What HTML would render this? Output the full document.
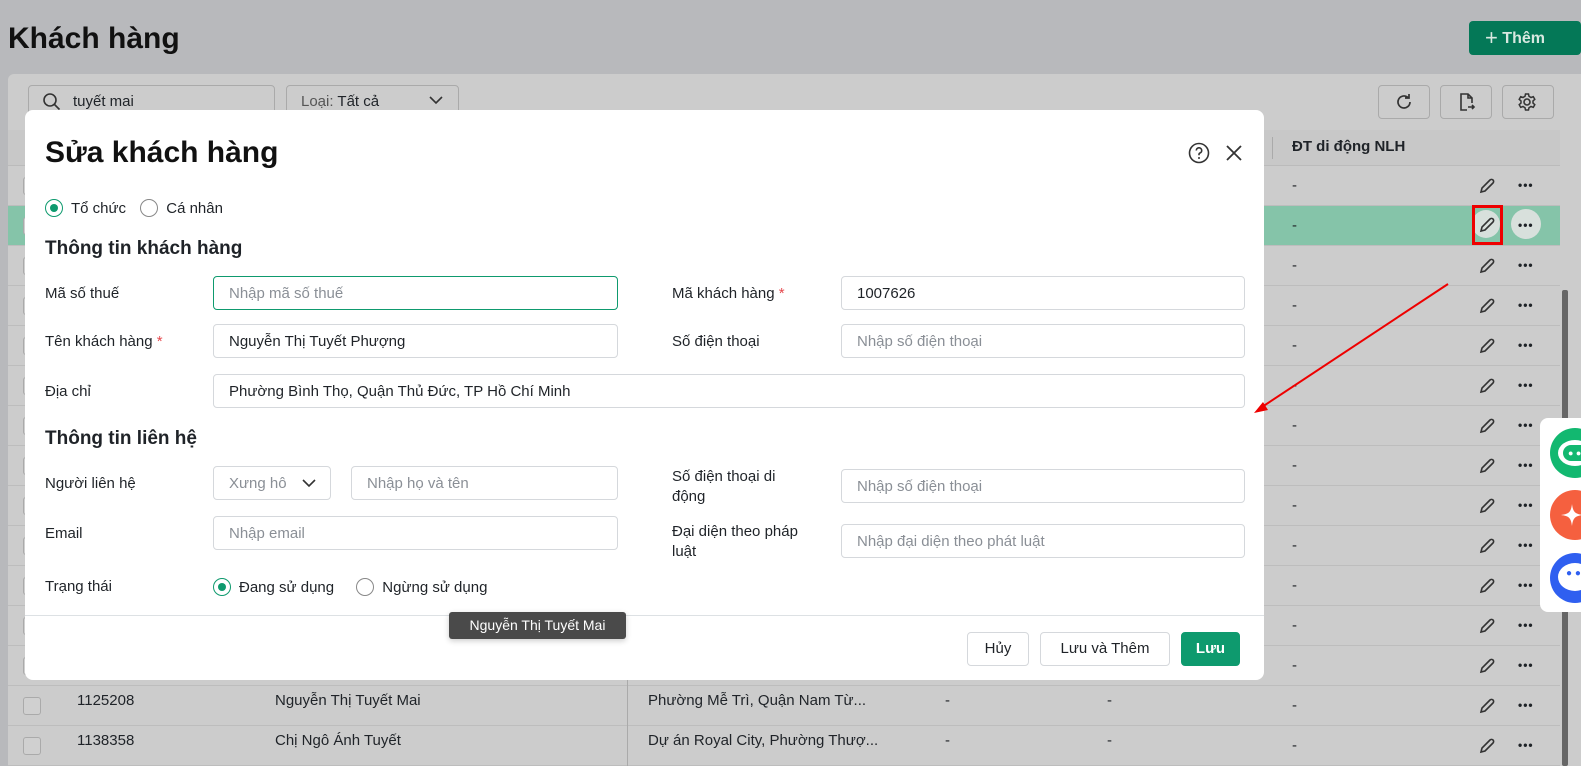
<!DOCTYPE html>
<html><head><meta charset="utf-8"><style>
*{box-sizing:border-box;margin:0;padding:0}
body{width:1581px;height:766px;overflow:hidden;position:relative;background:#b8b9bc;font-family:"Liberation Sans",Arial,sans-serif;color:#1f2328;font-size:15px}
.a{position:absolute}
.row{position:absolute;left:8px;width:1552px;height:40px;border-bottom:1px solid #bdbdbd;background:#cccccc}
.cb{position:absolute;left:15px;top:11px;width:18px;height:18px;border:1px solid #aaa;border-radius:3px;background:#d0d0d0}
.dash{position:absolute;left:1284px;top:11px}
.pen{position:absolute;left:1470px;top:11px}
.dots{position:absolute;left:1510px;top:12px;font-weight:bold;letter-spacing:1px;font-size:12px}
.lbl{position:absolute;font-size:15px;color:#1f2328}
.inp{position:absolute;height:34px;border:1px solid #d5d8dc;border-radius:4px;padding:0 15px;line-height:33px;font-size:15px;color:#1f2328;background:#fff}
.ph{color:#8a8f96}
.req{color:#e5484d}
.radio{display:inline-block;width:18px;height:18px;border:1px solid #888;border-radius:50%;vertical-align:-4px;margin-right:8px;position:relative;background:#fff}
.radio.on{border-color:#0e9a6e}
.radio.on:after{content:"";position:absolute;left:4px;top:4px;width:8px;height:8px;border-radius:50%;background:#0e9a6e}
.btn{position:absolute;top:632px;height:34px;border:1px solid #d5d8dc;border-radius:4px;background:#fff;line-height:32px;text-align:center;font-size:15px}
</style></head><body>
<div class="a" style="left:8px;top:22px;font-size:30px;font-weight:bold;color:#111">Khách hàng</div>
<div class="a" style="left:1469px;top:21px;width:112px;height:34px;background:#047857;border-radius:4px;font-size:16px;font-weight:bold;line-height:34px;padding-left:16px;color:#d8e8e0"><span style="font-size:22px;font-weight:normal;vertical-align:-2px">+</span> Thêm</div>
<div class="a" style="left:8px;top:74px;width:1573px;height:692px;background:#cccccc;border-radius:6px 0 0 0"></div>
<div class="a" style="left:28px;top:85px;width:247px;height:34px;border:1px solid #aaa;border-radius:4px;padding-left:44px;line-height:32px">tuyết mai</div>
<svg class="a" style="left:42px;top:92px" width="20" height="20" viewBox="0 0 20 20"><circle cx="8" cy="8" r="6" fill="none" stroke="#333" stroke-width="1.6"/><path d="M12.5 12.5l5 5" stroke="#333" stroke-width="1.6"/></svg>
<div class="a" style="left:286px;top:85px;width:173px;height:34px;border:1px solid #aaa;border-radius:4px;padding-left:14px;line-height:32px"><span style="color:#555">Loại:</span> Tất cả</div>
<svg class="a" style="left:428px;top:94px" width="16" height="12"><path d="M2 3l6 6 6-6" fill="none" stroke="#333" stroke-width="1.6"/></svg>
<div class="a" style="left:1378px;top:85px;width:52px;height:34px;border:1px solid #aaa;border-radius:4px"></div>
<div class="a" style="left:1440px;top:85px;width:52px;height:34px;border:1px solid #aaa;border-radius:4px"></div>
<div class="a" style="left:1502px;top:85px;width:52px;height:34px;border:1px solid #aaa;border-radius:4px"></div>
<svg class="a" style="left:1394px;top:92px" width="20" height="20" viewBox="0 0 20 20"><path d="M16 10a6 6 0 1 1-2-4.5M15 2v4h-4" fill="none" stroke="#333" stroke-width="1.7"/></svg>
<svg class="a" style="left:1456px;top:92px" width="20" height="20" viewBox="0 0 20 20"><path d="M11 18H5V2h7l4 4v5M12 2v4h4M12 15h6M16 13l2 2-2 2" fill="none" stroke="#333" stroke-width="1.6"/></svg>
<svg class="a" style="left:1517px;top:92px" width="20" height="20" viewBox="0 0 20 20"><circle cx="10" cy="10" r="3" fill="none" stroke="#333" stroke-width="1.6"/><path d="M8.5 2h3l.5 2.3 2 1.2 2.3-.8 1.5 2.6-1.8 1.6v2.2l1.8 1.6-1.5 2.6-2.3-.8-2 1.2-.5 2.3h-3l-.5-2.3-2-1.2-2.3.8-1.5-2.6 1.8-1.6V8.9L2.2 7.3l1.5-2.6 2.3.8 2-1.2z" fill="none" stroke="#333" stroke-width="1.5"/></svg>
<div class="a" style="left:8px;top:130px;width:1552px;height:36px;background:#c8c8c8;border-bottom:1px solid #bbb"></div>
<div class="a" style="left:1272px;top:137px;width:1px;height:22px;background:#aaa"></div>
<div class="a" style="left:1292px;top:138px;font-weight:bold;font-size:15px">ĐT di động NLH</div>
<div id="rows"></div>
<script>
var h='';for(var i=0;i<15;i++){var t=166+i*40;var g=i==1;h+='<div class="row" style="top:'+t+'px;'+(g?'background:#85c4a9;':'')+'"><div class="cb"></div><div class="dash">-</div><svg class="pen" width="18" height="18" viewBox="0 0 18 18"><path d="M3 15l1-4 8-8a2 2 0 0 1 3 3l-8 8z" fill="none" stroke="#333" stroke-width="1.6"/></svg><div class="dots">•••</div></div>';}
document.getElementById('rows').innerHTML=h;
</script>
<div class="a" style="left:1472px;top:210px;width:28px;height:28px;border-radius:50%;background:#d8e0dc"></div>
<div class="a" style="left:1511px;top:209px;width:30px;height:30px;border-radius:50%;background:#d8e0dc"></div>
<div class="a" style="left:1518px;top:218px;font-weight:bold;letter-spacing:1px;font-size:12px">•••</div>
<svg class="a" style="left:1478px;top:216px" width="18" height="18" viewBox="0 0 18 18"><path d="M3 15l1-4 8-8a2 2 0 0 1 3 3l-8 8z" fill="none" stroke="#333" stroke-width="1.6"/></svg>
<div class="a" style="left:1472px;top:205px;width:31px;height:40px;border:3px solid #e00"></div>
<div class="a" style="left:627px;top:680px;width:1px;height:86px;background:#aaa"></div>
<div class="a" style="left:77px;top:692px">1125208</div><div class="a" style="left:275px;top:692px">Nguyễn Thị Tuyết Mai</div><div class="a" style="left:648px;top:692px">Phường Mễ Trì, Quận Nam Từ...</div><div class="a" style="left:945px;top:692px">-</div><div class="a" style="left:1107px;top:692px">-</div>
<div class="a" style="left:77px;top:732px">1138358</div><div class="a" style="left:275px;top:732px">Chị Ngô Ánh Tuyết</div><div class="a" style="left:648px;top:732px">Dự án Royal City, Phường Thượ...</div><div class="a" style="left:945px;top:732px">-</div><div class="a" style="left:1107px;top:732px">-</div>
<div class="a" style="left:1562px;top:290px;width:6px;height:476px;background:#666;border-radius:2px"></div>
<!-- modal -->
<div class="a" style="left:25px;top:110px;width:1239px;height:570px;background:#fff;border-radius:8px"></div>
<div class="a" style="left:45px;top:136px;font-size:30px;font-weight:bold;color:#111">Sửa khách hàng</div>
<svg class="a" style="left:1187px;top:141px" width="24" height="24" viewBox="0 0 24 24"><circle cx="12" cy="12" r="9.5" fill="none" stroke="#333" stroke-width="1.6"/><path d="M9.3 9.5a2.7 2.7 0 1 1 3.7 2.5c-.7.3-1 .8-1 1.5v.8" fill="none" stroke="#333" stroke-width="1.6"/><circle cx="12" cy="17" r="1" fill="#333"/></svg>
<svg class="a" style="left:1224px;top:143px" width="20" height="20"><path d="M3 3l14 14M17 3L3 17" stroke="#333" stroke-width="1.8"/></svg>
<div class="a" style="left:45px;top:199px"><span class="radio on"></span>Tổ chức <span class="radio" style="margin-left:10px"></span>Cá nhân</div>
<div class="a" style="left:45px;top:238px;font-size:19px;font-weight:bold">Thông tin khách hàng</div>
<div class="lbl" style="left:45px;top:285px">Mã số thuế</div>
<div class="inp ph" style="left:213px;top:276px;width:405px;border-color:#0e9a6e">Nhập mã số thuế</div>
<div class="lbl" style="left:672px;top:285px">Mã khách hàng <span class="req">*</span></div>
<div class="inp" style="left:841px;top:276px;width:404px">1007626</div>
<div class="lbl" style="left:45px;top:333px">Tên khách hàng <span class="req">*</span></div>
<div class="inp" style="left:213px;top:324px;width:405px">Nguyễn Thị Tuyết Phượng</div>
<div class="lbl" style="left:672px;top:333px">Số điện thoại</div>
<div class="inp ph" style="left:841px;top:324px;width:404px">Nhập số điện thoại</div>
<div class="lbl" style="left:45px;top:383px">Địa chỉ</div>
<div class="inp" style="left:213px;top:374px;width:1032px">Phường Bình Thọ, Quận Thủ Đức, TP Hồ Chí Minh</div>
<div class="a" style="left:45px;top:428px;font-size:19px;font-weight:bold">Thông tin liên hệ</div>
<div class="lbl" style="left:45px;top:475px">Người liên hệ</div>
<div class="inp ph" style="left:213px;top:466px;width:118px">Xưng hô</div>
<svg class="a" style="left:301px;top:477px" width="16" height="12"><path d="M2 3l6 6 6-6" fill="none" stroke="#333" stroke-width="1.6"/></svg>
<div class="inp ph" style="left:351px;top:466px;width:267px">Nhập họ và tên</div>
<div class="lbl" style="left:672px;top:467px;line-height:20px">Số điện thoại di<br>động</div>
<div class="inp ph" style="left:841px;top:469px;width:404px">Nhập số điện thoại</div>
<div class="lbl" style="left:45px;top:525px">Email</div>
<div class="inp ph" style="left:213px;top:516px;width:405px">Nhập email</div>
<div class="lbl" style="left:672px;top:522px;line-height:20px">Đại diện theo pháp<br>luật</div>
<div class="inp ph" style="left:841px;top:524px;width:404px">Nhập đại diện theo phát luật</div>
<div class="lbl" style="left:45px;top:578px">Trạng thái</div>
<div class="a" style="left:213px;top:578px"><span class="radio on"></span>Đang sử dụng <span class="radio" style="margin-left:18px"></span>Ngừng sử dụng</div>
<div class="a" style="left:25px;top:615px;width:1239px;height:1px;background:#dde1e4"></div>
<div class="a" style="left:449px;top:612px;width:177px;height:27px;background:#4a4a4a;color:#fff;border-radius:3px;font-size:14px;line-height:27px;text-align:center;box-shadow:0 2px 6px rgba(0,0,0,.2)">Nguyễn Thị Tuyết Mai</div>
<div class="btn" style="left:967px;width:62px">Hủy</div>
<div class="btn" style="left:1040px;width:130px">Lưu và Thêm</div>
<div class="btn" style="left:1181px;width:59px;background:#0e9a6e;border-color:#0e9a6e;color:#fff;font-weight:bold">Lưu</div>
<svg class="a" style="left:0;top:0" width="1581" height="766"><line x1="1448" y1="284" x2="1262" y2="407" stroke="#e00" stroke-width="2"/><path d="M1254 413l14-3-5-8z" fill="#e00"/></svg>
<div class="a" style="left:1540px;top:418px;width:50px;height:194px;background:#fff;border-radius:8px"></div>
<div class="a" style="left:1550px;top:428px;width:50px;height:50px;border-radius:50%;background:#12b870"></div>
<div class="a" style="left:1558px;top:440px;width:34px;height:26px;border-radius:50%;background:#fff"></div>
<div class="a" style="left:1563px;top:445px;width:30px;height:16px;border-radius:8px;background:#12b870;color:#fff;font-size:9px;line-height:16px;padding-left:5px">● ●</div>
<div class="a" style="left:1550px;top:490px;width:50px;height:50px;border-radius:50%;background:#f5603f"></div>
<svg class="a" style="left:1560px;top:503px" width="24" height="24" viewBox="0 0 24 24"><path d="M12 1C13 9 15 11 23 12 15 13 13 15 12 23 11 15 9 13 1 12 9 11 11 9 12 1z" fill="#fff"/></svg>
<div class="a" style="left:1550px;top:553px;width:50px;height:50px;border-radius:50%;background:#2f5ff0"></div>
<div class="a" style="left:1558px;top:563px;width:34px;height:28px;border-radius:50%;background:#fff"></div>
<div class="a" style="left:1566px;top:568px;color:#2f5ff0;font-size:10px">● ●</div>
</body></html>
